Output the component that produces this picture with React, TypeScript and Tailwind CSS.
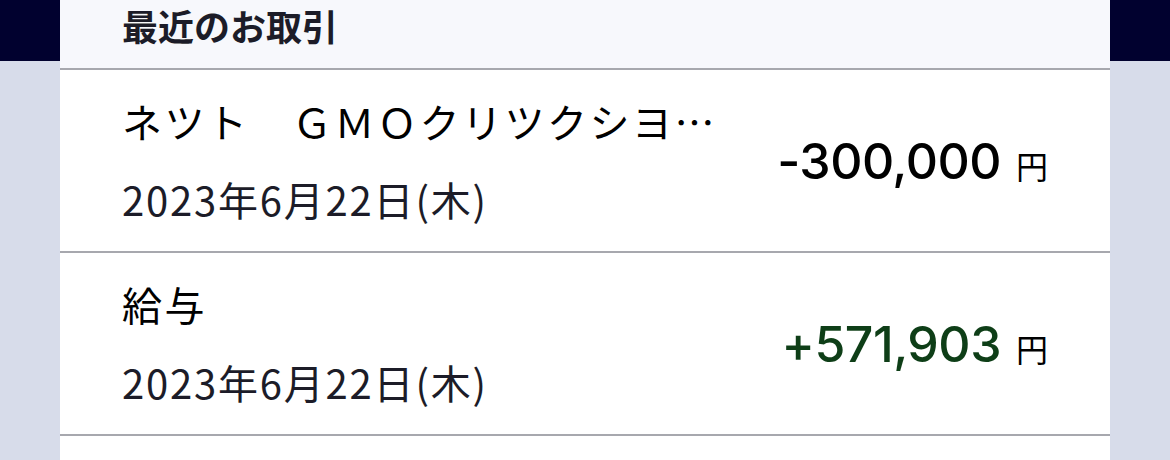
import React from 'react'

const jp = { fontFamily: '"Noto Sans CJK JP", "Noto Sans", sans-serif' }
const num = { fontFamily: 'Inter, "Noto Sans CJK JP", sans-serif' }

interface Tx {
  title: string
  date: string
  amount: string
  income?: boolean
}

const rows: Tx[] = [
  { title: 'ネツト　ＧＭＯクリツクシヨウケン', date: '2023年6月22日(木)', amount: '-300,000' },
  { title: '給与', date: '2023年6月22日(木)', amount: '+571,903', income: true },
]

function Side() {
  return (
    <div className="w-[60px] shrink-0 flex flex-col">
      <div className="h-[61px] bg-[#01012f]" />
      <div className="flex-1 bg-[#d7dcea]" />
    </div>
  )
}

function Row({ tx }: { tx: Tx }) {
  return (
    <div className="h-[183px] border-b-2 border-[#a7a8ae] bg-white flex items-center pl-[62px] pr-[62px]">
      <div className="flex-1 min-w-0 pt-[25px] pb-[26px] flex flex-col gap-[26px]" style={jp}>
        <div className="text-[40px] leading-[52px] tracking-[2.5px] text-black truncate max-w-[600px]">{tx.title}</div>
        <div className="text-[40px] leading-[52px] tracking-[1.8px] text-[#1c1c28]">{tx.date}</div>
      </div>
      <div className="flex items-baseline gap-[15px]">
        <span
          className={`text-[50px] leading-none font-medium tracking-[-0.5px] ${tx.income ? 'text-[#0e3e17]' : 'text-black'}`}
          style={num}
        >
          {tx.amount}
        </span>
        <span className="text-[32px] leading-none text-black" style={jp}>円</span>
      </div>
    </div>
  )
}

export default function App() {
  return (
    <div className="w-[1170px] h-[460px] overflow-hidden flex">
      <Side />
      <div className="flex-1 flex flex-col bg-white">
        <div className="h-[70px] shrink-0 bg-[#f7f8fc] border-b-2 border-[#a7a8ae] pl-[62px] pt-[1px]">
          <h2 className="text-[36px] leading-[48px] font-bold text-[#1c1c28]" style={jp}>最近のお取引</h2>
        </div>
        {rows.map((tx, i) => (
          <Row key={i} tx={tx} />
        ))}
        <div className="flex-1 bg-white" />
      </div>
      <Side />
    </div>
  )
}
